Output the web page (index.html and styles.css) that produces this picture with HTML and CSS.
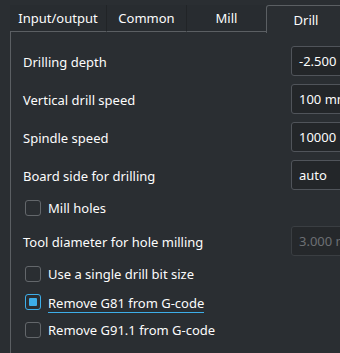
FILE: index.html
```html
<!DOCTYPE html>
<html lang="en">
  <head>
    <meta charset="UTF-8" />
    <title>Drill settings</title>
    <link rel="stylesheet" href="styles.css">
  </head>
  <body>
    <div class="tabs">
      <div class="tab tab-io">Input/output</div>
      <div class="tab">Common</div>
      <div class="tab">Mill</div>
      <div class="tab active">Drill</div>
    </div>

    <!-- Drill tab -->
    <div class="panel">
      <div class="row">
        <span class="label">Drilling depth</span>
        <div class="field">-2.500 mm</div>
      </div>
      <div class="row">
        <span class="label">Vertical drill speed</span>
        <div class="field">100 mm/min</div>
      </div>
      <div class="row">
        <span class="label">Spindle speed</span>
        <div class="field">10000 rpm</div>
      </div>
      <div class="row">
        <span class="label">Board side for drilling</span>
        <div class="field">auto</div>
      </div>
      <label class="check-row">
        <span class="box"></span>
        <span class="check-text">Mill holes</span>
      </label>
      <div class="row">
        <span class="label">Tool diameter for hole milling</span>
        <div class="field disabled">3.000 mm</div>
      </div>
      <label class="check-row">
        <span class="box"></span>
        <span class="check-text">Use a single drill bit size</span>
      </label>
      <label class="check-row">
        <span class="box checked"></span>
        <span class="check-text focused">Remove G81 from G-code</span>
      </label>
      <label class="check-row">
        <span class="box"></span>
        <span class="check-text">Remove G91.1 from G-code</span>
      </label>
    </div>
  </body>
</html>
```

FILE: styles.css
```css
body {
  font-family: "Noto Sans", sans-serif;
  font-size: 13px;
  background-color: #2a2e32;
  color: #fcfcfc;
  margin: 0;
  padding: 5px 0 0 10px;
  overflow: hidden;
  width: 340px;
  height: 353px;
  box-sizing: border-box;
}
.tabs {
  display: flex;
  height: 27px;
  width: 400px;
}
.tab {
  width: 80px;
  display: flex;
  align-items: center;
  justify-content: center;
  background-color: #282c30;
  border-left: 1px solid #212427;
  box-sizing: border-box;
  border-bottom: 1px solid #5b5f63;
}
.tab-io {
  width: 96px;
  border-left: none;
}
.tab.active {
  background-color: #2a2e32;
  border: 1px solid #5b5f63;
  border-bottom: none;
  border-radius: 3px 3px 0 0;
  height: 28px;
}
.panel {
  border-left: 1px solid #5b5f63;
  padding: 14px 0 0 12px;
  display: flex;
  flex-direction: column;
  gap: 8px;
  width: 400px;
  height: 400px;
}
.row {
  display: flex;
  align-items: center;
  height: 30px;
}
.label {
  width: 268px;
  padding-top: 1px;
}
.field {
  height: 30px;
  width: 120px;
  box-sizing: border-box;
  border: 1px solid #50545a;
  border-radius: 3px;
  background-color: #232629;
  padding-left: 7px;
  display: flex;
  align-items: center;
}
.field.disabled {
  color: #6c6f73;
  background-color: #25282b;
  border-color: #3a3e42;
}
.check-row {
  display: flex;
  align-items: center;
  height: 20px;
  padding-left: 2px;
}
.box {
  width: 16px;
  height: 16px;
  box-sizing: border-box;
  border: 1px solid #63676b;
  border-radius: 3px;
  margin-right: 7px;
  position: relative;
}
.box.checked {
  border-color: #3daee9;
}
.box.checked::after {
  content: "";
  position: absolute;
  left: 3px;
  top: 3px;
  width: 8px;
  height: 8px;
  background-color: #3daee9;
  border-radius: 1px;
}
.check-text.focused {
  border-bottom: 1px solid #3daee9;
  line-height: 17px;
  margin-top: 4px;
}
```
